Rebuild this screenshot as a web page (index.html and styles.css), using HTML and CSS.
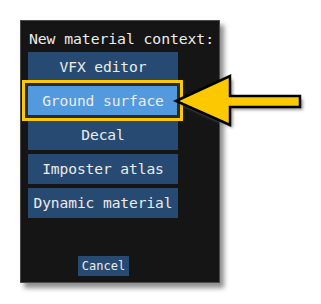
FILE: index.html
```html
<!DOCTYPE html>
<html>
<head>
<meta charset="utf-8">
<link rel="stylesheet" href="styles.css">
</head>
<body>
<div class="stage">
  <div class="panel">
    <div class="title">New material context:</div>
    <div class="column">
      <div class="list">
        <div class="btn">VFX editor</div>
        <div class="btn active">Ground surface</div>
        <div class="btn">Decal</div>
        <div class="btn">Imposter atlas</div>
        <div class="btn">Dynamic material</div>
      </div>
      <div class="cancel">Cancel</div>
    </div>
  </div>
  <div class="frame"></div>
  <svg class="arrow" width="140" height="60" viewBox="0 0 140 60">
    <defs>
      <filter id="sh" x="-20%" y="-20%" width="140%" height="140%">
        <feGaussianBlur stdDeviation="1.5"/>
      </filter>
    </defs>
    <polygon points="6,31 60,6 60,26 130,26 130,37 60,37 60,55" fill="#777" opacity="0.7" transform="translate(3,3)" filter="url(#sh)"/>
    <polygon points="6,31 60,6 60,26 130,26 130,37 60,37 60,55" fill="#fcc800" stroke="#000" stroke-width="2.5" stroke-linejoin="miter"/>
  </svg>
</div>
</body>
</html>
```
FILE: styles.css
```css
html, body {
  margin: 0;
  padding: 0;
  background: #ffffff;
}
.stage {
  position: relative;
  width: 321px;
  height: 304px;
  padding: 20px;
  box-sizing: border-box;
}
.panel {
  width: 200px;
  height: 263px;
  box-sizing: border-box;
  background: #151515;
  border: 1px solid #4a4a4a;
  box-shadow: 4px 5px 5px rgba(0, 0, 0, 0.45);
  padding: 9px 0 0 7px;
  font-family: "DejaVu Sans Mono", "Liberation Mono", monospace;
  color: #ececec;
  display: flex;
  flex-direction: column;
}
.title {
  font-size: 14.8px;
  line-height: 17px;
  height: 17px;
  padding-left: 1px;
  white-space: nowrap;
  letter-spacing: -0.1px;
}
.column {
  width: 150px;
  margin-top: 5px;
  display: flex;
  flex-direction: column;
  align-items: center;
}
.list {
  width: 150px;
  display: flex;
  flex-direction: column;
  gap: 4px;
}
.btn {
  height: 30px;
  background: #274a72;
  font-size: 14.6px;
  line-height: 30px;
  text-align: center;
  white-space: nowrap;
  letter-spacing: -0.1px;
}
.btn.active {
  background: #5299dd;
}
.cancel {
  margin-top: 38px;
  width: 51px;
  height: 20px;
  background: #274a72;
  font-size: 12px;
  line-height: 21px;
  text-align: center;
  margin-left: 1px;
}
.frame {
  position: absolute;
  left: 22px;
  top: 80px;
  width: 161px;
  height: 41px;
  box-sizing: border-box;
  border: 3px solid #fcc800;
  box-shadow: inset 0 0 0 3px #2b2b1e;
}
.arrow {
  position: absolute;
  left: 170px;
  top: 70px;
}
```
